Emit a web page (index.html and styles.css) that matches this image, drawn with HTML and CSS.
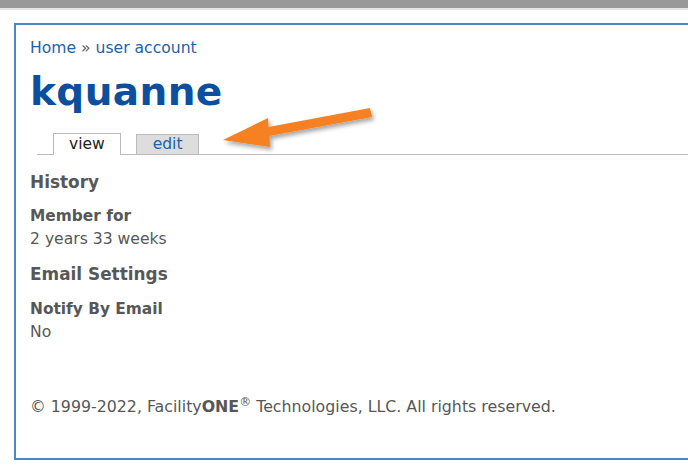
FILE: index.html
```html
<!DOCTYPE html>
<html>
	<head>
		<link rel="stylesheet" href="styles.css">
		<title>kquanne | user account</title>
	</head>
	<body>
		<div class="topbar"></div>
		<div class="page">
			<div class="breadcrumb"><a href="#">Home</a> &raquo; <a href="#">user account</a></div>
			<h1 class="title">kquanne</h1>
			<ul class="tabs">
				<li class="active"><a href="#">view</a></li>
				<li><a href="#">edit</a></li>
			</ul>
			<svg class="arrow" width="190" height="60" viewBox="0 0 190 60">
				<defs>
					<filter id="shadow" x="-10%" y="-30%" width="130%" height="170%">
						<feDropShadow dx="2" dy="3" stdDeviation="2" flood-color="#000" flood-opacity="0.35"/>
					</filter>
				</defs>
				<path d="M23 40 L68 18 L68.5 27 L170 8 L172 17 L69.5 36 L70 47 Z" fill="#f68121" filter="url(#shadow)"/>
			</svg>
			<div class="profile">
				<h3>History</h3>
				<dl class="first">
					<dt>Member for</dt>
					<dd>2 years 33 weeks</dd>
				</dl>
				<h3>Email Settings</h3>
				<dl>
					<dt>Notify By Email</dt>
					<dd>No</dd>
				</dl>
			</div>
			<div class="footer">&copy; 1999-2022, Facility<b>ONE</b><sup>&reg;</sup> Technologies, LLC. All rights reserved.</div>
		</div>
	</body>
</html>
```
FILE: styles.css
```css
body { margin:0; background:#fff; font-family:"DejaVu Sans", Verdana, sans-serif; color:#575757; }
a { color:#2361ab; text-decoration:none; }
.topbar { height:8px; background:#999; border-bottom:2px solid #e6e6e6; }
.page { position:relative; margin:13px -20px 0 14px; height:437px; border:2px solid #4a86c8; border-right:none; padding:0 0 0 14px; box-sizing:border-box; }
.breadcrumb { font-size:15.6px; padding-top:14px; line-height:18px; }
.title { margin:12px 0 0 0; font-size:39px; line-height:46px; color:#0b4f9e; font-weight:bold; letter-spacing:0.4px; }
.tabs { list-style:none; margin:18px 0 0 7px; padding:0 0 0 16px; border-bottom:1px solid #bbb; height:21px; display:flex; gap:15px; }
.tabs li { margin:0; }
.tabs a { display:block; font-size:15.5px; line-height:19px; padding:0 16px; border:1px solid #bbb; border-bottom:none; background:#ddd; color:#2361ab; height:19px; margin-top:1px; }
.tabs .active a { background:#fff; color:#222; height:21px; margin-top:0; line-height:21px; padding:0 15px; }
.arrow { position:absolute; left:184px; top:75px; }
.profile { margin-top:17px; }
.profile h3 { margin:0; font-size:16.9px; line-height:20px; font-weight:bold; color:#575757; }
.profile dl { margin:15px 0 13px 0; }
.profile dl.first { margin-top:14px; }
.profile dt { font-weight:bold; font-size:15.4px; line-height:21px; }
.profile dd { margin:0; font-size:15.6px; line-height:24px; }
.footer { margin-top:53px; font-size:15.8px; line-height:20px; }
.footer b { font-weight:bold; }
.footer sup { font-size:12px; line-height:0; }
```
